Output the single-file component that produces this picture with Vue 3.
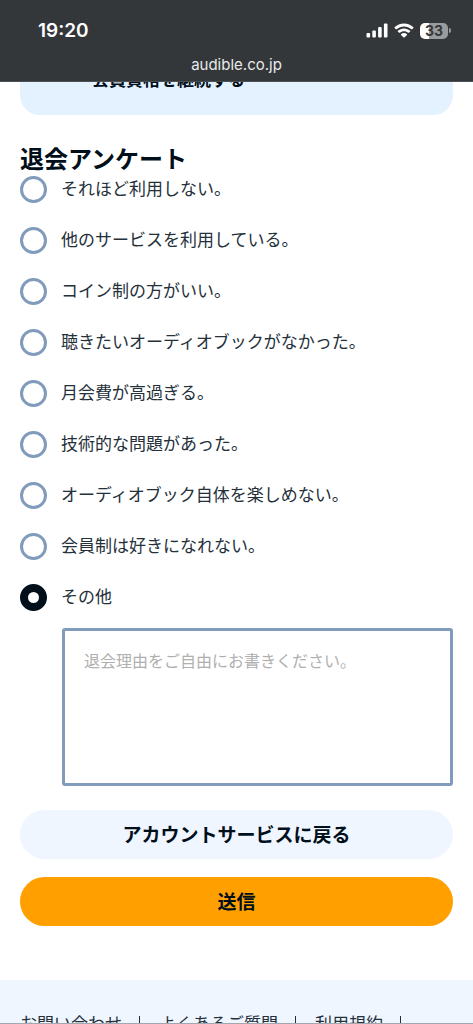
<script setup>
import { ref } from 'vue'

const reasons = [
  'それほど利用しない。',
  '他のサービスを利用している。',
  'コイン制の方がいい。',
  '聴きたいオーディオブックがなかった。',
  '月会費が高過ぎる。',
  '技術的な問題があった。',
  'オーディオブック自体を楽しめない。',
  '会員制は好きになれない。',
  'その他',
]
const selected = ref(8)
const comment = ref('')
const footerLinks = ['お問い合わせ', 'よくあるご質問', '利用規約']
</script>

<template>
  <div class="screen">
    <header class="browser-bar">
      <div class="status">
        <time class="clock">19:20</time>
        <div class="indicators">
          <svg class="signal" viewBox="0 0 22 15" aria-hidden="true">
            <rect x="0.5" y="10" width="3.6" height="4.6" rx="1" />
            <rect x="6.3" y="7.5" width="3.6" height="7.1" rx="1" />
            <rect x="12.1" y="4" width="3.6" height="10.6" rx="1" />
            <rect x="17.9" y="0.6" width="3.6" height="14" rx="1" />
          </svg>
          <svg class="wifi" viewBox="0 0 20 15" aria-hidden="true">
            <path d="M10 0.6C13.7 0.6 17 2 19.4 4.3C19.6 4.5 19.6 4.8 19.4 5L18.1 6.3C17.9 6.5 17.6 6.5 17.4 6.3C15.4 4.5 12.8 3.4 10 3.4C7.2 3.4 4.6 4.5 2.6 6.3C2.4 6.5 2.1 6.5 1.9 6.3L0.6 5C0.4 4.8 0.4 4.5 0.6 4.3C3 2 6.3 0.6 10 0.6Z" />
            <path d="M10 5.4C12.4 5.4 14.6 6.3 16.2 7.8C16.4 8 16.4 8.3 16.2 8.5L14.8 9.8C14.6 10 14.4 10 14.2 9.8C13.1 8.8 11.6 8.2 10 8.2C8.4 8.2 6.9 8.8 5.8 9.8C5.6 10 5.4 10 5.2 9.8L3.8 8.5C3.6 8.3 3.6 8 3.8 7.8C5.4 6.3 7.6 5.4 10 5.4Z" />
            <path d="M10 10.1C11.2 10.1 12.2 10.5 13 11.2C13.2 11.4 13.2 11.7 13 11.9L10.4 14.4C10.2 14.6 9.8 14.6 9.6 14.4L7 11.9C6.8 11.7 6.8 11.4 7 11.2C7.8 10.5 8.8 10.1 10 10.1Z" />
          </svg>
          <div class="battery">
            <span class="cell">33</span>
            <span class="tip"></span>
          </div>
        </div>
      </div>
      <div class="address">audible.co.jp</div>
    </header>

    <main class="content">
      <div class="card-view">
        <section class="card">会員資格を継続する</section>
      </div>

      <form class="survey" @submit.prevent>
        <h1 id="survey-title" class="title">退会アンケート</h1>
        <div class="reasons" role="radiogroup" aria-labelledby="survey-title">
          <label v-for="(reason, i) in reasons" :key="reason" class="reason">
            <input v-model="selected" class="radio" type="radio" name="reason" :value="i" />
            <span>{{ reason }}</span>
          </label>
        </div>
        <textarea
          v-model="comment"
          class="comment"
          aria-label="その他"
          placeholder="退会理由をご自由にお書きください。"
        ></textarea>
        <div class="actions">
          <button class="button secondary" type="button">アカウントサービスに戻る</button>
          <button class="button primary" type="submit">送信</button>
        </div>
      </form>
    </main>

    <footer class="footer">
      <ul class="links">
        <li v-for="link in footerLinks" :key="link">
          <a href="#">{{ link }}</a>
        </li>
      </ul>
    </footer>
  </div>
</template>

<style>
body {
  margin: 0;
}
</style>

<style scoped>
* {
  box-sizing: border-box;
}
.screen {
  display: flex;
  flex-direction: column;
  height: 100vh;
  overflow: hidden;
  background: #fff;
  color: #000f1a;
  border-bottom: 1px solid #a3a8ae;
  font-family: "Noto Sans CJK JP", sans-serif;
}
.browser-bar {
  flex: none;
  padding: 18px 22px 4px 38px;
  background: #343739;
  border-bottom: 1px solid #4d5052;
  color: #fff;
  font-family: Inter, "Liberation Sans", sans-serif;
}
.status {
  display: flex;
  align-items: center;
  justify-content: space-between;
  height: 25px;
}
.clock {
  font-size: 19px;
  font-weight: 600;
  line-height: 24px;
}
.indicators {
  display: flex;
  align-items: center;
  gap: 6px;
}
.indicators svg {
  height: 15px;
  fill: #fff;
}
.signal {
  width: 22px;
}
.wifi {
  width: 20px;
}
.battery {
  display: flex;
  align-items: center;
  gap: 1px;
}
.cell {
  width: 28px;
  height: 16px;
  border-radius: 5px;
  background: linear-gradient(to right, #fff 33%, #999b9c 33%);
  color: #343739;
  font-size: 14px;
  font-weight: 700;
  line-height: 16px;
  text-align: center;
}
.tip {
  width: 2px;
  height: 5px;
  border-radius: 0 2px 2px 0;
  background: #999b9c;
}
.address {
  margin: 10px 0 0 -16px;
  color: #e9eaea;
  font-size: 15px;
  line-height: 24px;
  text-align: center;
}
.content {
  flex: none;
  padding: 0 20px;
}
.card-view {
  display: flex;
  flex-direction: column;
  justify-content: flex-end;
  height: 33px;
  overflow: hidden;
}
.card {
  flex: none;
  padding: 24px 72px;
  border-radius: 20px;
  background: #e4f1ff;
  font-size: 17px;
  font-weight: 700;
  line-height: 24px;
}
.title {
  margin: 27px 0 0;
  font-size: 24px;
  font-weight: 700;
  line-height: 32px;
}
.reasons {
  display: flex;
  flex-direction: column;
  gap: 24px;
}
.reason {
  display: flex;
  gap: 14px;
  color: #24303a;
  font-size: 17px;
  line-height: 27px;
}
.radio {
  flex: none;
  appearance: none;
  width: 27px;
  height: 27px;
  margin: 2px 0 -2px;
  border: 3px solid #819bbd;
  border-radius: 50%;
  background: #fff;
}
.radio:checked {
  border: 8px solid #000f1a;
}
.comment {
  display: block;
  width: calc(100% - 42px);
  height: 158px;
  margin: 19px 0 0 42px;
  padding: 17px 19px;
  border: 3px solid #819bbd;
  border-radius: 3px;
  background: #fff;
  color: #24303a;
  font: inherit;
  font-size: 16px;
  line-height: 24px;
  resize: none;
}
.comment::placeholder {
  color: #b0b0b0;
  opacity: 1;
}
.actions {
  display: flex;
  flex-direction: column;
  gap: 18px;
  margin-top: 24px;
}
.button {
  width: 100%;
  padding: 11px 24px 13px;
  border: 0;
  border-radius: 25px;
  color: #000f1a;
  font: inherit;
  font-size: 19px;
  font-weight: 700;
  line-height: 25px;
}
.secondary {
  background: #eff6ff;
}
.primary {
  background: #ffa000;
}
.footer {
  flex: 1 0 auto;
  margin-top: 54px;
  padding: 31px 20px 0;
  background: #eff6ff;
}
.links {
  display: flex;
  height: 11px;
  margin: 0;
  padding: 0;
  list-style: none;
  font-size: 17px;
  line-height: 24px;
}
.links li {
  display: flex;
  align-items: center;
  height: 24px;
}
.links li::after {
  content: "";
  width: 1px;
  height: 14px;
  margin: 0 19px 0 17px;
  background: #24303a;
}
.links a {
  color: #24303a;
  text-decoration: none;
}
</style>
